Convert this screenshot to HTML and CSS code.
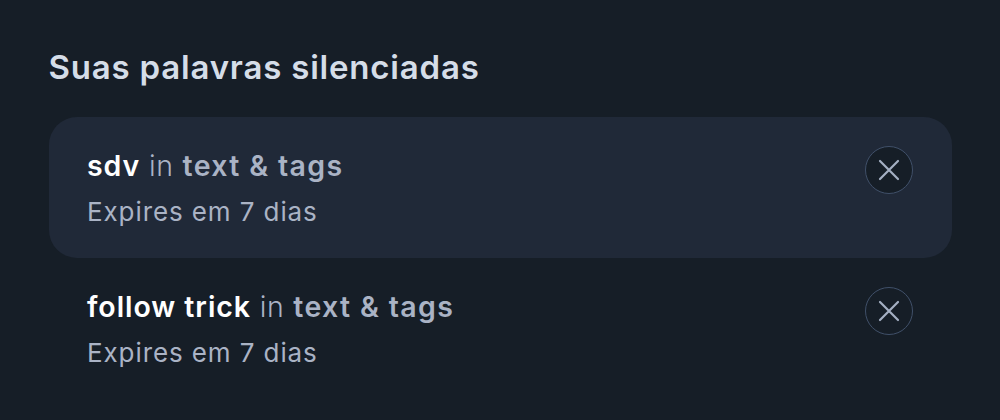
FILE: index.html
```html
<!DOCTYPE html>
<html lang="pt-BR">
<head>
    <meta charset="UTF-8">
    <meta name="viewport" content="width=device-width, initial-scale=1.0">
    <title>Palavras silenciadas</title>
    <link rel="stylesheet" href="styles.css">
</head>
<body>
    <div class="container">
        <h1>Suas palavras silenciadas</h1>
        <div class="word-row highlight">
            <div class="word-info">
                <p class="word"><strong>sdv</strong> in <b class="target">text &amp; tags</b></p>
                <p class="expires">Expires em 7 dias</p>
            </div>
            <button class="remove" type="button" aria-label="Remover">
                <svg viewBox="0 0 24 24" width="24" height="24"><path d="M3 3L21 21M21 3L3 21"/></svg>
            </button>
        </div>
        <div class="word-row">
            <div class="word-info">
                <p class="word"><strong>follow trick</strong> in <b class="target">text &amp; tags</b></p>
                <p class="expires">Expires em 7 dias</p>
            </div>
            <button class="remove" type="button" aria-label="Remover">
                <svg viewBox="0 0 24 24" width="24" height="24"><path d="M3 3L21 21M21 3L3 21"/></svg>
            </button>
        </div>
    </div>
</body>
</html>
```
FILE: styles.css
```css
body {
    margin: 0;
    background-color: #161e27;
    font-family: Inter, "Liberation Sans", sans-serif;
}
.container {
    padding: 47px 48.5px 0;
}
h1 {
    margin: 0 0 29.5px;
    font-size: 33px;
    line-height: 40px;
    font-weight: 600;
    letter-spacing: 0.8px;
    color: #d5dde8;
}
.word-row {
    display: flex;
    justify-content: space-between;
    align-items: flex-start;
    height: 141px;
    box-sizing: border-box;
    padding: 29.5px 38.5px 0;
    border-radius: 28px;
}
.highlight {
    background-color: #202938;
}
.word,
.expires {
    margin: 0;
    color: #aab3c5;
    white-space: nowrap;
}
.word {
    font-size: 28.5px;
    line-height: 40px;
    font-weight: 300;
    letter-spacing: 0.7px;
}
.word strong {
    font-weight: 600;
    letter-spacing: 0.95px;
    color: #fff;
}
.word .target {
    font-weight: 600;
    letter-spacing: 1.35px;
}
.expires {
    margin-top: 8px;
    font-size: 26px;
    line-height: 36px;
    letter-spacing: 0.9px;
}
.remove {
    display: flex;
    align-items: center;
    justify-content: center;
    width: 48px;
    height: 48px;
    padding: 0;
    border: 1px solid #405069;
    border-radius: 50%;
    background-color: #161e27;
}
.remove path {
    fill: none;
    stroke: #a5b0c3;
    stroke-width: 2.2;
    stroke-linecap: round;
}
```
